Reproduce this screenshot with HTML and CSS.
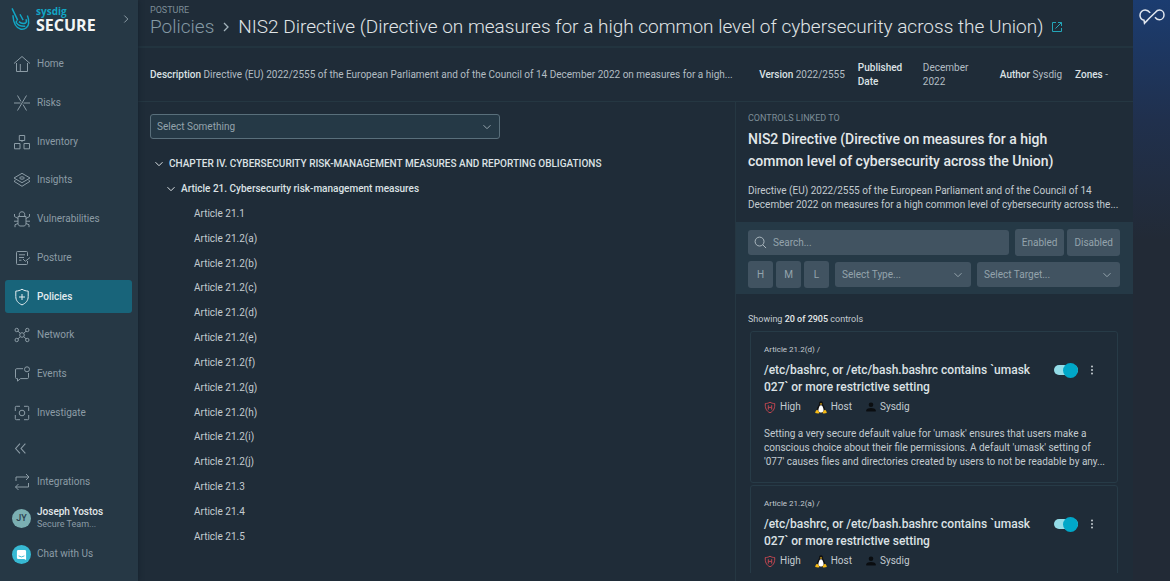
FILE: index.html
```html
<!DOCTYPE html>
<html lang="en">
<head>
    <meta charset="UTF-8">
    <meta name="viewport" content="width=device-width, initial-scale=1">
    <title>Sysdig Secure - Policies</title>
    <link rel="stylesheet" href="styles.css">
</head>
<body>

<!-- shared icons -->
<svg class="sprite" aria-hidden="true">
    <symbol id="chevron" viewBox="0 0 10 10"><path d="M1.5 3.2 5 6.7l3.5-3.5"/></symbol>
    <symbol id="severity" viewBox="0 0 12 12"><path d="M6 .7c1.5 1 3 1.300 4.700 1.300.3 4.300-.8 7.500-4.700 9.300C2.100 9.500 1 6.300 1.300 2 3 2 4.500 1.700 6 .7z"/><path d="M4.300 3.700v4.400M7.700 3.700v4.400M4.300 5.900h3.400"/></symbol>
    <symbol id="linux" viewBox="0 0 12 13">
        <path fill="#111" d="M6 .3c1.500 0 2 1 2 2.500 0 1.700 2.500 3.500 2.200 7.200L8 12H4L1.800 10C1.500 6.500 4 4.500 4 2.800 4 1.300 4.500.3 6 .3z"/>
        <path fill="#fff" d="M6 4.200c1 0 1.400.7 1.800 1.900.7 1.600 1 3 .7 4.500L6 11.700l-2.500-1.100c-.3-1.500 0-2.900.7-4.500C4.600 4.900 5 4.200 6 4.200z"/>
        <path fill="#f5b914" d="M2.300 8.700l2.300 2.900c-.4 1.500-2.500 1-4.400.5.300-1.500.5-2.900 2.100-3.400zM9.700 8.700l-2.300 2.900c.4 1.500 2.500 1 4.400.5-.3-1.500-.5-2.900-2.100-3.400zM4.800 2.700 6 2.300l1.200.4L6 4z"/>
    </symbol>
    <symbol id="person" viewBox="0 0 10 10"><circle cx="5" cy="2.700" r="2.300"/><path d="M.3 9.500V8.300C.3 6.800 3 6 5 6s4.700.8 4.700 2.300v1.200z"/></symbol>
    <symbol id="more" viewBox="0 0 4 10"><circle cx="2" cy="1.500" r="1"/><circle cx="2" cy="5" r="1"/><circle cx="2" cy="8.500" r="1"/></symbol>
</svg>

<div class="app">
    <aside class="sidebar">
        <div class="brand">
            <svg class="brand-mark" viewBox="0 0 18 22" aria-hidden="true"><path d="M1 1l5.300 11M8.500 6.500l3 5.500M1.800 7.500c.5 7 2.500 12.200 7.600 13.200 4.200.6 7.100-2.400 7.300-5.700.2-3-.2-5.300-1.200-7.300M6.300 12c-1 .5-1.700 1.200-1.400 2.500M5 14.500c1.800 2.700 4.200 3.700 8.500 3.300M7.500 13.500c2 1.800 4 2.300 6.300 1.300 1-.7 1-2 .4-3.500"/></svg>
            <div class="brand-name"><span>sysdig</span><strong>SECURE</strong></div>
            <button class="icon-button expand" aria-label="Expand menu"><svg class="icon-small" viewBox="0 0 10 10"><path d="M3.300 1.500 6.800 5 3.300 8.500"/></svg></button>
        </div>

        <nav class="nav" aria-label="Main">
            <a href="#home"><svg class="icon" viewBox="0 0 18 18"><path d="M1 8.500 9 1.500l8 7M3.500 8v8.500h11V8M7.300 16.500V9"/></svg>Home</a>
            <a href="#risks"><svg class="icon" viewBox="0 0 18 18"><path d="M1 9h6.500M10.500 9H17M4.500 1.500 8 7.500M13.500 1.500l-9 15M10 10.500l3.500 6"/></svg>Risks</a>
            <a href="#inventory"><svg class="icon" viewBox="0 0 18 18"><path d="M6.300 2.500h5.400v5H6.300zM1.500 10.500H7v5.300H1.500zM11 10.500h5.500v5.300H11zM9 7.500v1.500"/></svg>Inventory</a>
            <a href="#insights"><svg class="icon" viewBox="0 0 18 18"><path d="M9 2.300 17 7l-8 4.700L1 7zM2.500 9.200 1 10.300l8 5 8-5-1.500-1.100"/><ellipse cx="9" cy="7" rx="2.300" ry="1.200"/></svg>Insights</a>
            <a href="#vulnerabilities"><svg class="icon" viewBox="0 0 18 18"><path d="M5 6.500h8v7.700L11.500 16h-5L5 14.200zM6.300 6.500V4.300C6.300 2.500 7.500 1.800 9 1.800s2.700.7 2.700 2.500v2.200M5 8.500 1.500 6.500V4M13 8.500l3.500-2V4M5 11.200H1M13 11.200h4M5 13.500 2 14.700v2.500M13 13.500l3 1.200v2.500"/></svg>Vulnerabilities</a>
            <a href="#posture"><svg class="icon" viewBox="0 0 18 18"><path d="M14.500 7V3.500q0-1-1-1h-9q-1 0-1 1v11q0 1 1 1h9q1 0 1-1V12M6 5.800h6M6 8.500h5M6 11.200h2.500M10 10l2.300 2.300L17 8.500"/></svg>Posture</a>
            <a href="#policies" class="active" aria-current="page"><svg class="icon" viewBox="0 0 18 18"><path d="M9 1.200c1.900 1.300 4 1.800 6.200 1.900v5.400c0 4.200-2.500 6.800-6.200 8.400-3.700-1.600-6.200-4.200-6.200-8.400V3.100C5 3 7.100 2.500 9 1.200zM9 6v6M6 9h6"/></svg>Policies</a>
            <a href="#network"><svg class="icon" viewBox="0 0 18 18"><circle cx="9" cy="9" r="2.300"/><circle cx="3.700" cy="4" r="1.700"/><circle cx="14.300" cy="4" r="1.700"/><circle cx="3.700" cy="14" r="1.700"/><circle cx="14.300" cy="14" r="1.700"/><path d="m5 5.200 2.300 2.200M13 5.200l-2.300 2.200M5 12.800l2.300-2.200M13 12.800l-2.300-2.200"/></svg>Network</a>
            <a href="#events"><svg class="icon" viewBox="0 0 18 18"><path d="M10 3.700H3.700q-1.200 0-1.200 1.200v7.500q0 1.200 1.200 1.200h.8v2.500l3-2.500h6.800q1.200 0 1.200-1.200V8"/><circle cx="14" cy="4.300" r="2.500"/></svg>Events</a>
            <a href="#investigate"><svg class="icon" viewBox="0 0 18 18"><path d="M7 2.300H3.300q-1 0-1 1V7M11 2.300h3.700q1 0 1 1V7M7 15.700H3.300q-1 0-1-1V11M11 15.700h3.700q1 0 1-1V11"/><circle cx="9" cy="9" r="2.800"/></svg>Investigate</a>
        </nav>

        <div class="sidebar-footer">
            <button class="icon-button collapse" aria-label="Collapse menu"><svg viewBox="0 0 12 12"><path d="M5.500 1.500 1.500 6l4 4.500M10.500 1.500 6.500 6l4 4.500"/></svg></button>
            <a href="#integrations" class="footer-link"><svg class="icon" viewBox="0 0 18 18"><path d="M3 8V4h13M13 1l3 3-3 3M15.500 10v4H2.500M5.500 11l-3 3 3 3"/></svg>Integrations</a>
            <a href="#profile" class="footer-link">
                <span class="avatar">JY</span>
                <span class="user"><strong>Joseph Yostos</strong><small>Secure Team...</small></span>
            </a>
            <a href="#chat" class="footer-link"><span class="avatar chat"><svg viewBox="0 0 12 12"><path class="bubble" d="M2.500 1h7Q11 1 11 2.500V12L9 11H2.500Q1 11 1 9.500v-7Q1 1 2.500 1z"/><path class="smile" d="M2.800 7.500q3.200 2.300 6.400 0"/></svg></span>Chat with Us</a>
        </div>
    </aside>

    <main class="main">
        <header class="page-header">
            <div class="eyebrow">POSTURE</div>
            <h1>
                <a href="#policies" class="crumb">Policies</a>
                <svg class="crumb-arrow" viewBox="0 0 10 10" aria-hidden="true"><path d="M3 1 7 5 3 9"/></svg>
                <span>NIS2 Directive (Directive on measures for a high common level of cybersecurity across the Union)</span>
                <a href="#open" class="open-link" aria-label="Open in new tab"><svg viewBox="0 0 12 12"><path d="M5 1.500H1.500v9h9V7M7 1.500h3.500V5M10.500 1.500l-6 6"/></svg></a>
            </h1>
        </header>

        <div class="meta">
            <div class="meta-description"><b>Description</b> Directive (EU) 2022/2555 of the European Parliament and of the Council of 14 December 2022 on measures for a high...</div>
            <div class="meta-item"><b>Version</b> 2022/2555</div>
            <div class="meta-item meta-date"><b>Published Date</b><span>December 2022</span></div>
            <div class="meta-item meta-author"><b>Author</b> Sysdig</div>
            <div class="meta-item"><b>Zones</b> -</div>
        </div>

        <div class="columns">
            <section class="requirements">
                <div class="select select-outline">
                    <select aria-label="Select Something"><option>Select Something</option></select>
                    <svg class="icon-small"><use href="#chevron"/></svg>
                </div>
                <ul class="tree">
                    <li class="chapter"><svg class="icon-small"><use href="#chevron"/></svg>CHAPTER IV. CYBERSECURITY RISK-MANAGEMENT MEASURES AND REPORTING OBLIGATIONS</li>
                    <li class="group"><svg class="icon-small"><use href="#chevron"/></svg>Article 21. Cybersecurity risk-management measures</li>
                    <li>Article 21.1</li>
                    <li>Article 21.2(a)</li>
                    <li>Article 21.2(b)</li>
                    <li>Article 21.2(c)</li>
                    <li>Article 21.2(d)</li>
                    <li>Article 21.2(e)</li>
                    <li>Article 21.2(f)</li>
                    <li>Article 21.2(g)</li>
                    <li>Article 21.2(h)</li>
                    <li>Article 21.2(i)</li>
                    <li>Article 21.2(j)</li>
                    <li>Article 21.3</li>
                    <li>Article 21.4</li>
                    <li>Article 21.5</li>
                </ul>
            </section>

            <section class="controls">
                <div class="controls-header">
                    <div class="eyebrow">CONTROLS LINKED TO</div>
                    <h2>NIS2 Directive (Directive on measures for a high common level of cybersecurity across the Union)</h2>
                    <p>Directive (EU) 2022/2555 of the European Parliament and of the Council of 14 December 2022 on measures for a high common level of cybersecurity across the...</p>
                </div>

                <form class="filters">
                    <div class="filter-row">
                        <div class="search">
                            <svg viewBox="0 0 14 14" aria-hidden="true"><circle cx="6" cy="6" r="4.800"/><path d="m9.500 9.500 3.500 3.500"/></svg>
                            <input type="search" placeholder="Search..." aria-label="Search">
                        </div>
                        <div class="button-group">
                            <button type="button">Enabled</button>
                            <button type="button">Disabled</button>
                        </div>
                    </div>
                    <div class="filter-row">
                        <div class="button-group severity-group">
                            <button type="button">H</button>
                            <button type="button">M</button>
                            <button type="button">L</button>
                        </div>
                        <div class="select select-type">
                            <select aria-label="Select Type"><option>Select Type...</option></select>
                            <svg class="icon-small"><use href="#chevron"/></svg>
                        </div>
                        <div class="select select-target">
                            <select aria-label="Select Target"><option>Select Target...</option></select>
                            <svg class="icon-small"><use href="#chevron"/></svg>
                        </div>
                    </div>
                </form>

                <div class="count">Showing <b>20 of 2905</b> controls</div>

                <div class="cards">
                    <article class="card">
                        <div class="card-path">Article 21.2(d) /</div>
                        <div class="card-head">
                            <h3>/etc/bashrc, or /etc/bash.bashrc contains `umask 027` or more restrictive setting</h3>
                            <input type="checkbox" class="toggle" aria-label="Enable control" checked>
                            <button class="icon-button more" aria-label="More actions"><svg><use href="#more"/></svg></button>
                        </div>
                        <div class="tags">
                            <span><svg class="severity"><use href="#severity"/></svg>High</span>
                            <span><svg class="linux"><use href="#linux"/></svg>Host</span>
                            <span><svg class="person"><use href="#person"/></svg>Sysdig</span>
                        </div>
                        <p>Setting a very secure default value for 'umask' ensures that users make a conscious choice about their file permissions. A default 'umask' setting of '077' causes files and directories created by users to not be readable by any...</p>
                    </article>
                    <article class="card">
                        <div class="card-path">Article 21.2(a) /</div>
                        <div class="card-head">
                            <h3>/etc/bashrc, or /etc/bash.bashrc contains `umask 027` or more restrictive setting</h3>
                            <input type="checkbox" class="toggle" aria-label="Enable control" checked>
                            <button class="icon-button more" aria-label="More actions"><svg><use href="#more"/></svg></button>
                        </div>
                        <div class="tags">
                            <span><svg class="severity"><use href="#severity"/></svg>High</span>
                            <span><svg class="linux"><use href="#linux"/></svg>Host</span>
                            <span><svg class="person"><use href="#person"/></svg>Sysdig</span>
                        </div>
                    </article>
                </div>
            </section>
        </div>
    </main>

    <aside class="rail">
        <svg viewBox="0 0 26 16" aria-label="Assistant"><path d="M10.500 9.500C8.800 11.500 8 12 5.500 14.800L5 11.700C2.500 11 1 9 1 6.700 1 3.800 3.300 1.500 6.200 1.500c2.500 0 3.800 1.300 5 2.900M10.500 9.500l6-5.800c1-1.300 2.200-2.200 4-2.200 2.600 0 4.500 2.200 4.500 4.900s-2 4.900-4.600 4.900c-2 0-3.200-1-4.400-2.600"/></svg>
    </aside>
</div>

</body>
</html>
```
FILE: styles.css
```css
* {
    box-sizing: border-box;
}
body {
    margin: 0;
    font-family: Roboto, sans-serif;
    font-size: 10px;
    line-height: 14px;
    color: #c3cbd0;
    background: #1f2c38;
}
h1, h2, h3, p, ul {
    margin: 0;
    padding: 0;
    font-weight: 400;
}
b, strong {
    font-weight: 500;
}
a {
    color: inherit;
    text-decoration: none;
}
button, input, select {
    font: inherit;
    color: inherit;
}
svg {
    display: block;
    flex-shrink: 0;
    fill: none;
    stroke: currentColor;
}
.sprite {
    display: none;
}
.icon {
    width: 18px;
    height: 18px;
}
.icon-small {
    width: 10px;
    height: 10px;
}
.icon-button {
    display: flex;
    padding: 0;
    border: 0;
    background: none;
    cursor: pointer;
}
.app {
    display: grid;
    grid-template-columns: 138px minmax(0, 1fr) 37px;
    height: 100vh;
    overflow: hidden;
}

/* sidebar */
.sidebar {
    display: flex;
    flex-direction: column;
    min-height: 0;
    background: #263845;
    color: #8c9ca6;
    box-shadow: 0 0 5px #14202a;
    z-index: 1;
}
.brand {
    display: flex;
    align-items: flex-start;
    height: 45px;
    padding: 6px 7px 0 11px;
}
.brand-mark {
    width: 19px;
    height: 26px;
    color: #12a5c4;
    stroke-width: 1.4;
}
.brand-name {
    flex: 1;
    padding-left: 6px;
    font-family: "Open Sans", sans-serif;
    color: #f2f5f6;
}
.brand-name span, .brand-name strong {
    display: block;
}
.brand-name span {
    font-size: 10px;
    line-height: 11px;
    font-weight: 700;
    color: #12a5c4;
}
.brand-name strong {
    font-size: 16px;
    line-height: 16px;
    font-weight: 700;
}
.expand {
    padding-top: 8px;
}
.nav {
    flex: 1;
    display: grid;
    grid-auto-rows: 1fr;
    padding: 0 6px 0 5px;
}
.nav a {
    display: flex;
    align-items: center;
    gap: 6px;
    margin: 3px 0;
    padding-left: 8px;
    border-radius: 3px;
}
.nav .active {
    background: #18647a;
    color: #e3edf0;
    font-weight: 500;
}
.sidebar-footer {
    padding: 0 6px 9px 12px;
}
.collapse {
    align-items: center;
    height: 32px;
    padding-left: 2px;
}
.collapse svg {
    width: 13px;
    height: 13px;
}
.footer-link {
    display: flex;
    align-items: center;
    gap: 6px;
    height: 36px;
}
.footer-link .icon {
    margin-left: 1px;
}
.avatar {
    display: grid;
    place-items: center;
    width: 19px;
    height: 19px;
    border-radius: 50%;
    background: #7bafb2;
    color: #2a4150;
    font-size: 9px;
    font-weight: 500;
}
.user strong, .user small {
    display: block;
    line-height: 13px;
}
.user strong {
    color: #e3e8ea;
}
.user small {
    font-size: 9px;
}
.chat {
    background: #37b9d3;
}
.chat svg {
    width: 11px;
    height: 11px;
}
.bubble {
    fill: #fff;
    stroke: none;
}
.smile {
    stroke: #37b9d3;
}

/* header */
.main {
    display: flex;
    flex-direction: column;
    min-height: 0;
}
.eyebrow {
    font-size: 9px;
    line-height: 12px;
    color: #7d8d97;
}
.page-header {
    height: 48px;
    padding: 4px 12px 0;
    border-bottom: 2px solid #22343f;
}
h1 {
    display: flex;
    align-items: center;
    font-size: 19px;
    line-height: 22px;
    font-weight: 300;
    color: #e0e5e7;
    white-space: nowrap;
}
.crumb {
    color: #8499a4;
}
.crumb-arrow {
    width: 10px;
    height: 10px;
    margin: 0 7px;
    color: #a3b3bb;
    stroke-width: 1.3;
}
.open-link {
    margin-left: 8px;
    color: #24a5b8;
}
.open-link svg {
    width: 12px;
    height: 12px;
}
.meta {
    display: flex;
    align-items: center;
    height: 54px;
    padding: 0 25px 0 12px;
    border-bottom: 1px solid #253742;
    color: #b3bdc3;
}
.meta b {
    color: #dce2e5;
}
.meta-description {
    flex: 1;
    overflow: hidden;
    white-space: nowrap;
}
.meta-item {
    margin-left: 13px;
    white-space: nowrap;
}
.meta-date {
    display: flex;
    gap: 18px;
    white-space: normal;
}
.meta-date b, .meta-date span {
    width: 47px;
}
.meta-author {
    margin-left: 30px;
}

/* requirements tree */
.columns {
    flex: 1;
    display: grid;
    grid-template-columns: 3fr 2fr;
    min-height: 0;
}
.requirements {
    display: flex;
    flex-direction: column;
    gap: 13px;
    padding: 12px 12px 32px;
}
.select {
    position: relative;
    display: flex;
    align-items: center;
    color: #94a3ac;
}
.select select {
    width: 100%;
    height: 25px;
    padding: 0 7px;
    border: 0;
    border-radius: 3px;
    background: #415361;
    appearance: none;
}
.select svg {
    position: absolute;
    right: 8px;
    pointer-events: none;
}
.select-outline {
    width: 61%;
}
.select-outline select {
    padding: 0 6px;
    border: 1px solid #596f7b;
    background: #253946;
}
.tree {
    flex: 1;
    display: grid;
    grid-auto-rows: 1fr;
    list-style: none;
}
.tree li {
    display: flex;
    align-items: center;
    gap: 5px;
    padding-left: 44px;
}
.tree .chapter, .tree .group {
    font-weight: 500;
    color: #dce2e5;
}
.tree .chapter {
    padding-left: 4px;
}
.tree .group {
    padding-left: 16px;
}

/* linked controls */
.controls {
    display: flex;
    flex-direction: column;
    min-height: 0;
    border-left: 1px solid #253742;
}
.controls-header {
    height: 120px;
    padding: 10px 12px 0;
}
h2 {
    margin: 4px 0 12px;
    padding-right: 40px;
    font-size: 14px;
    line-height: 22px;
    font-weight: 500;
    color: #e3e8ea;
}
.filters {
    display: grid;
    gap: 5px;
    padding: 7px 13px 6px 12px;
    background: #253946;
}
.filter-row {
    display: flex;
    align-items: center;
    gap: 6px;
    color: #94a3ac;
}
.search {
    flex: 1;
    display: flex;
    align-items: center;
    gap: 6px;
    height: 25px;
    padding: 0 6px;
    border-radius: 3px;
    background: #415361;
}
.search svg {
    width: 13px;
    height: 13px;
    color: #b2bec5;
}
.search input {
    width: 100%;
    min-width: 0;
    padding: 0;
    border: 0;
    background: none;
    outline: 0;
}
.search input::placeholder {
    color: #94a3ac;
}
.button-group {
    display: flex;
    gap: 3px;
}
.filters button {
    height: 27px;
    padding: 0 7px;
    border: 0;
    border-radius: 3px;
    background: #415361;
}
.severity-group button {
    width: 25px;
    padding: 0;
}
.select-type {
    flex: 20;
}
.select-target {
    flex: 21;
}
.count {
    padding: 18px 12px 5px;
    font-size: 9px;
}
.count b {
    color: #e3e8ea;
}
.cards {
    flex: 1;
    display: flex;
    flex-direction: column;
    gap: 2px;
    min-height: 0;
    margin-bottom: 8px;
    padding: 0 15px 0 14px;
    overflow: hidden;
}
.card {
    flex-shrink: 0;
    min-height: 152px;
    padding: 11px 9px 12px 13px;
    border: 1px solid #273b47;
    border-radius: 3px;
}
.card-path {
    font-size: 8px;
}
.card-head {
    display: flex;
    align-items: flex-start;
    margin-top: 5px;
}
h3 {
    flex: 1;
    padding-right: 16px;
    font-size: 12px;
    line-height: 17px;
    font-weight: 500;
    color: #dce2e5;
}
.toggle {
    display: flex;
    align-items: center;
    justify-content: flex-end;
    width: 24px;
    height: 10px;
    margin: 3px 12px 0 0;
    border-radius: 5px;
    background: #93dce7;
    appearance: none;
}
.toggle::before {
    content: "";
    flex-shrink: 0;
    width: 15px;
    height: 15px;
    border-radius: 50%;
    background: #00a7c8;
}
.more {
    margin: 3px 14px 0 0;
}
.more svg {
    width: 4px;
    height: 10px;
    fill: currentColor;
    stroke: none;
}
.tags {
    display: flex;
    gap: 14px;
    margin: 4px 0 13px;
}
.tags span {
    display: flex;
    align-items: center;
    gap: 4px;
}
.tags svg {
    width: 12px;
    height: 13px;
}
.tags .severity {
    color: #c24650;
}
.tags .linux {
    stroke: none;
}
.tags .person {
    width: 10px;
    height: 10px;
    fill: #0a0d10;
    stroke: none;
}

/* right rail */
.rail {
    padding: 8px 6px;
    background: linear-gradient(#1b3c70, #20304d 120px, #222a36 240px, #222a36);
}
.rail svg {
    width: 26px;
    height: 17px;
    color: #e1e7ef;
    stroke-width: 1.5;
}
```
